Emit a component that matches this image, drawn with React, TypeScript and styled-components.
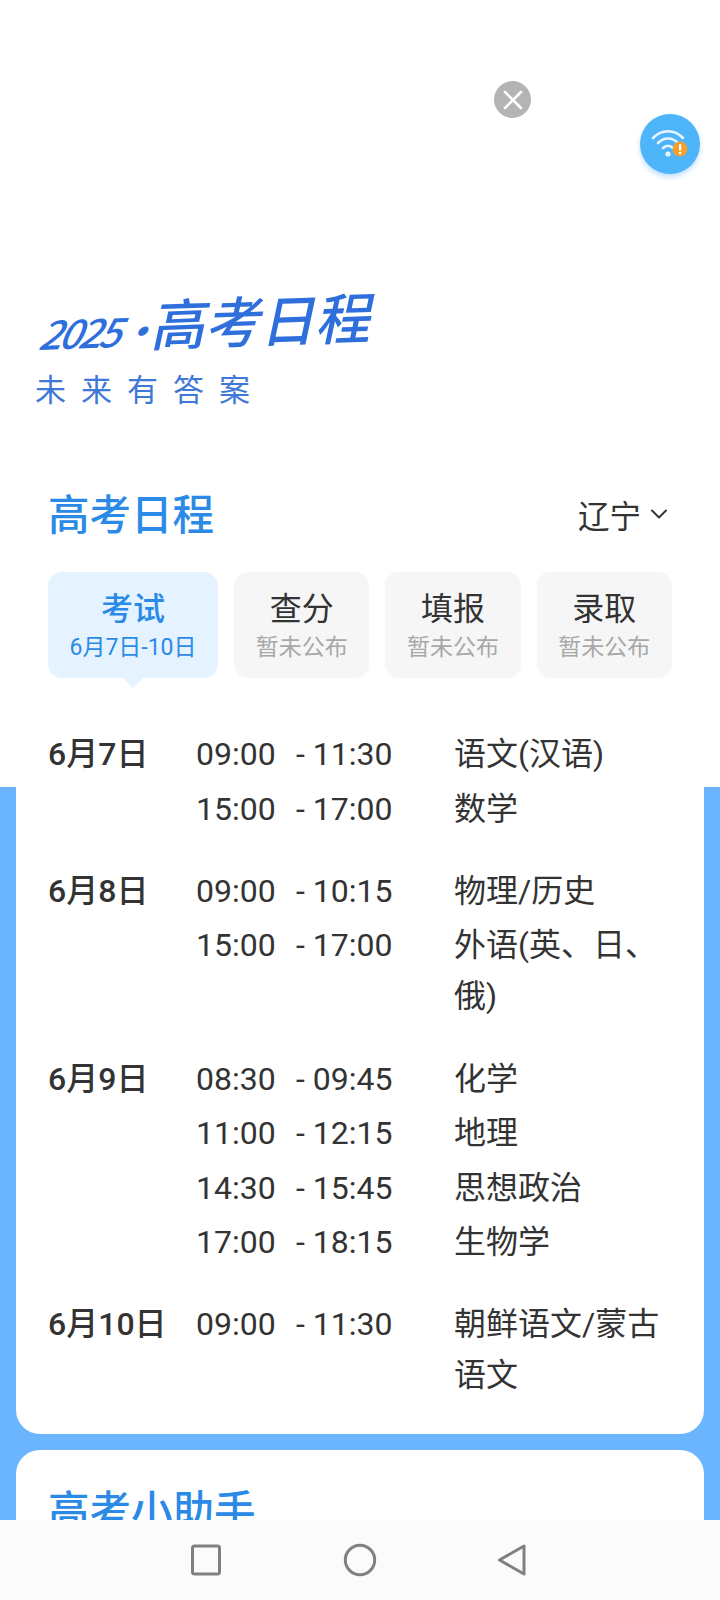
import React from "react";
import styled, { createGlobalStyle } from "styled-components";

const Global = createGlobalStyle`
  html, body { margin: 0; padding: 0; background: #fff; }
  body { font-family: Roboto, "Noto Sans CJK SC", sans-serif; }
  * { box-sizing: border-box; }
`;

const Page = styled.div`
  position: relative;
  width: 720px;
  height: 1600px;
  overflow: hidden;
  background: linear-gradient(#fff 787px, #6bb5ff 787px);
`;

const Hero = styled.header`
  display: flex;
  flex-direction: column;
  padding: 292px 0 0 35px;
  height: 470px;
`;

const LogoLine = styled.div`
  display: flex;
  align-items: baseline;
  height: 68px;
  color: #2f6fdc;
  font-family: "Noto Sans CJK SC", sans-serif;
  font-weight: 500;
  transform: rotate(-2deg) skewX(-14deg);
  transform-origin: left bottom;
  white-space: nowrap;
`;

const LogoYear = styled.span`
  font-size: 40px;
  letter-spacing: -3px;
  width: 113px;
  font-style: italic;
`;

const LogoName = styled.span`
  font-size: 55px;
  line-height: 68px;
`;

const Slogan = styled.div`
  margin-top: 8px;
  color: #3f78d6;
  font-family: "Noto Sans CJK SC", sans-serif;
  font-size: 31px;
  font-weight: 400;
  line-height: 40px;
  letter-spacing: 15px;
`;

const Card = styled.section`
  margin: 0 16px;
  padding: 0 32px;
  background: #fff;
  border-radius: 0 0 24px 24px;
`;

const HelperCard = styled(Card)`
  margin-top: 16px;
  padding-top: 30px;
  height: 200px;
  border-radius: 24px 24px 0 0;
`;

const TitleRow = styled.div`
  display: flex;
  align-items: center;
  justify-content: space-between;
  height: 90px;
  padding-bottom: 6px;
`;

const Title = styled.h2`
  margin: 0;
  font-family: "Noto Sans CJK SC", sans-serif;
  font-size: 41.5px;
  font-weight: 500;
  line-height: 56px;
  color: #2a8ae6;
`;

const Province = styled.div`
  display: flex;
  align-items: center;
  gap: 9px;
  padding: 3px 4px 0 0;
  font-family: "Noto Sans CJK SC", sans-serif;
  font-size: 31.5px;
  font-weight: 400;
  color: #333;
`;

const Tabs = styled.div`
  display: flex;
  gap: 16px;
  margin-top: 12px;
`;

const Tab = styled.div<{ $active?: boolean }>`
  position: relative;
  flex: ${(p) => (p.$active ? "0 0 170px" : "1 1 0")};
  height: 106px;
  padding-top: 13px;
  display: flex;
  flex-direction: column;
  align-items: center;
  border-radius: 14px;
  background: ${(p) => (p.$active ? "#e5f2ff" : "#f6f6f6")};
  ${(p) =>
    p.$active
      ? `&::after {
      content: "";
      position: absolute;
      left: 50%;
      bottom: -10px;
      margin-left: -10px;
      border-left: 10px solid transparent;
      border-right: 10px solid transparent;
      border-top: 10px solid #e5f2ff;
    }`
      : ""}
`;

const TabName = styled.div<{ $active?: boolean }>`
  font-family: "Noto Sans CJK SC", sans-serif;
  font-size: 32px;
  line-height: 42px;
  font-weight: ${(p) => (p.$active ? 500 : 400)};
  color: ${(p) => (p.$active ? "#2a8ae6" : "#333")};
`;

const TabSub = styled.div<{ $active?: boolean }>`
  margin-top: 6px;
  font-size: 23px;
  line-height: 30px;
  color: ${(p) => (p.$active ? "#2a8ae6" : "#a8a8a8")};
`;

const Schedule = styled.div`
  display: flex;
  flex-direction: column;
  gap: 31.3px;
  margin-top: 51px;
  padding-bottom: 33px;
`;

const Day = styled.div`
  display: grid;
  grid-template-columns: 148px 1fr;
`;

const DayLabel = styled.div`
  font-size: 32px;
  line-height: 51px;
  font-weight: 500;
  color: #333;
`;

const Slots = styled.div`
  display: flex;
  flex-direction: column;
  gap: 3.5px;
`;

const Slot = styled.div`
  display: grid;
  grid-template-columns: 100px 158px 1fr;
  font-size: 32px;
  line-height: 51px;
  color: #333;
`;

const Subject = styled.div`
  font-family: Roboto, "Noto Sans CJK SC", sans-serif;
`;

const CloseBtn = styled.div`
  position: absolute;
  left: 494px;
  top: 81px;
  width: 37px;
  height: 37px;
  border-radius: 50%;
  background: #b4b4b4;
  display: flex;
  align-items: center;
  justify-content: center;
`;

const WifiBtn = styled.div`
  position: absolute;
  left: 640px;
  top: 114px;
  width: 60px;
  height: 60px;
  border-radius: 50%;
  background: #4fb5fb;
  box-shadow: 0 3px 5px rgba(79, 160, 251, 0.35);
  display: flex;
  align-items: center;
  justify-content: center;
`;

const NavBar = styled.nav`
  position: absolute;
  left: 0;
  right: 0;
  bottom: 0;
  height: 80px;
  background: #fbfbfb;
`;

const NavIcon = styled.svg<{ $left: number }>`
  position: absolute;
  left: ${(p) => p.$left}px;
  top: 23px;
`;

const days = [
  { d: "6月7日", s: [["09:00", "- 11:30", "语文(汉语)"], ["15:00", "- 17:00", "数学"]] },
  { d: "6月8日", s: [["09:00", "- 10:15", "物理/历史"], ["15:00", "- 17:00", "外语(英、日、俄)"]] },
  {
    d: "6月9日",
    s: [
      ["08:30", "- 09:45", "化学"],
      ["11:00", "- 12:15", "地理"],
      ["14:30", "- 15:45", "思想政治"],
      ["17:00", "- 18:15", "生物学"],
    ],
  },
  { d: "6月10日", s: [["09:00", "- 11:30", "朝鲜语文/蒙古语文"]] },
];

export default function App() {
  return (
    <Page>
      <Global />
      <Hero>
        <LogoLine>
          <LogoYear>2025·</LogoYear>
          <LogoName>高考日程</LogoName>
        </LogoLine>
        <Slogan>未来有答案</Slogan>
      </Hero>
      <Card>
        <TitleRow>
          <Title>高考日程</Title>
          <Province>
            辽宁
            <svg width="18" height="12" viewBox="0 0 18 12" fill="none">
              <path d="M2 2.5 L9 9.5 L16 2.5" stroke="#333" strokeWidth="2" strokeLinecap="round" strokeLinejoin="round" />
            </svg>
          </Province>
        </TitleRow>
        <Tabs>
          <Tab $active>
            <TabName $active>考试</TabName>
            <TabSub $active>6月7日-10日</TabSub>
          </Tab>
          {["查分", "填报", "录取"].map((n) => (
            <Tab key={n}>
              <TabName>{n}</TabName>
              <TabSub>暂未公布</TabSub>
            </Tab>
          ))}
        </Tabs>
        <Schedule>
          {days.map((day) => (
            <Day key={day.d}>
              <DayLabel>{day.d}</DayLabel>
              <Slots>
                {day.s.map((r) => (
                  <Slot key={r[0]}>
                    <div>{r[0]}</div>
                    <div>{r[1]}</div>
                    <Subject>{r[2]}</Subject>
                  </Slot>
                ))}
              </Slots>
            </Day>
          ))}
        </Schedule>
      </Card>
      <HelperCard>
        <Title>高考小助手</Title>
      </HelperCard>
      <CloseBtn>
        <svg width="22" height="22" viewBox="0 0 22 22" fill="none">
          <path d="M3 3 L19 19 M19 3 L3 19" stroke="#fff" strokeWidth="2.6" strokeLinecap="round" />
        </svg>
      </CloseBtn>
      <WifiBtn>
        <svg width="38" height="32" viewBox="0 0 38 32" fill="none">
          <path d="M2 10 C11 1 23 1 32 10" stroke="#e8f5ff" strokeWidth="2.6" strokeLinecap="round" />
          <path d="M7 15 C13 9 21 9 27 15" stroke="#e8f5ff" strokeWidth="2.6" strokeLinecap="round" />
          <path d="M12 20 C15 17 19 17 22 20" stroke="#e8f5ff" strokeWidth="2.6" strokeLinecap="round" />
          <circle cx="17" cy="26" r="2.6" fill="#e8f5ff" />
          <circle cx="29" cy="21" r="7.5" fill="#f4a02f" />
          <rect x="28" y="16" width="2.2" height="6.5" rx="1" fill="#fff" />
          <circle cx="29.1" cy="25" r="1.3" fill="#fff" />
        </svg>
      </WifiBtn>
      <NavBar>
        <NavIcon $left={190} width="32" height="34" viewBox="0 0 32 34" fill="none">
          <rect x="2.5" y="3" width="27" height="28" rx="2" stroke="#808080" strokeWidth="3" />
        </NavIcon>
        <NavIcon $left={343} width="34" height="34" viewBox="0 0 34 34" fill="none">
          <circle cx="17" cy="17" r="14.7" stroke="#808080" strokeWidth="3" />
        </NavIcon>
        <NavIcon $left={496} width="32" height="34" viewBox="0 0 32 34" fill="none">
          <path d="M28 3 L28 31 L3.5 17 Z" stroke="#808080" strokeWidth="3" strokeLinejoin="round" />
        </NavIcon>
      </NavBar>
    </Page>
  );
}
